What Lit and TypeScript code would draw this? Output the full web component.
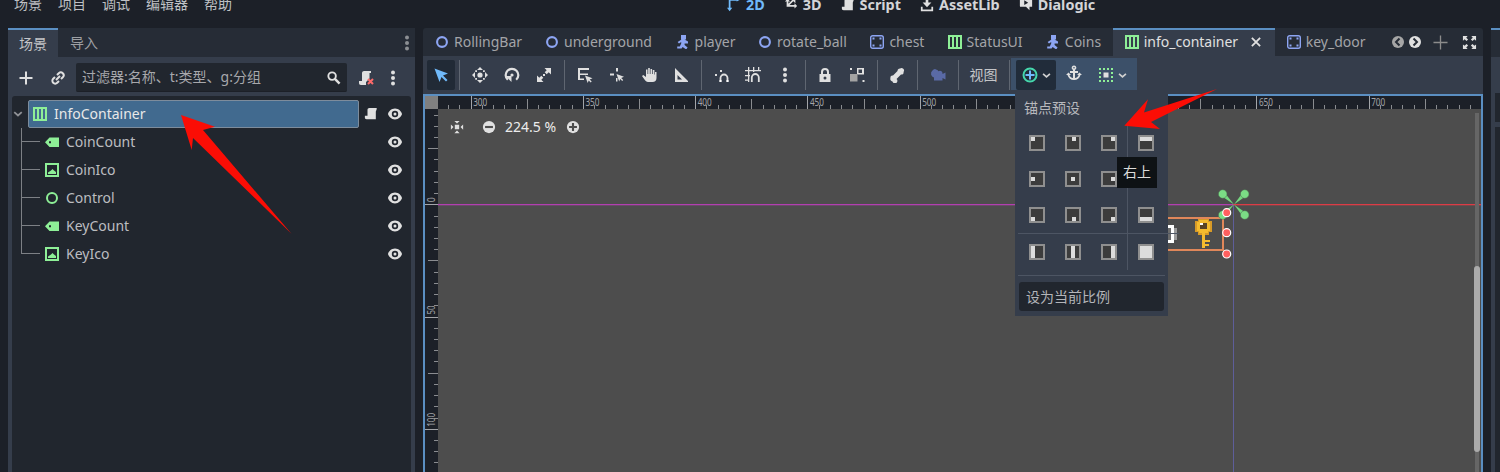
import { LitElement, html, css, svg, nothing } from "lit";
import { customElement } from "lit/decorators.js";

const W = "#e0e0e0";
const B = "#8da5f3";
const G = "#8eef97";

const I: Record<string, any> = {
  ring: svg`<circle cx="8" cy="8" r="4.9" fill="none" stroke="${B}" stroke-width="2.1"/>`,
  gring: svg`<circle cx="8" cy="8" r="5" fill="none" stroke="${G}" stroke-width="2"/>`,
  player: svg`<path fill="${B}" d="M6 1h5v4.500H9.500L13 7.500v2H9.600v1.600l3 2.400-1.400 2-3.600-2.600-1 1.600H2.200v-2h2.600l1.400-3V8L4 9.500 2.600 8l3.900-2.500H6z"/>`,
  frame: svg`<rect x="1.700" y="1.700" width="12.600" height="12.600" rx="2" fill="none" stroke="${B}" stroke-width="1.400"/><path fill="${B}" d="M3.500 3.500h2v2h-2zM10.500 3.500h2v2h-2zM3.500 10.500h2v2h-2zM10.500 10.500h2v2h-2z"/>`,
  box: svg`<path fill="${G}" fill-rule="evenodd" d="M1 1h14v14H1zM3 3v10h2V3zm4 0v10h2V3zm4 0v10h2V3z"/>`,
  label: svg`<path fill="${G}" d="M5.500 3.500H15v9.500H5.500L1 8.200zM5 7.200v2h2v-2z" fill-rule="evenodd"/>`,
  tex: svg`<path fill="${G}" fill-rule="evenodd" d="M1 1h14v14H1zM3 3v10h10V3z"/><path fill="${G}" d="M4 12v-1.500L7 8.500 8.500 7 10 8.500 12 10v2z"/>`,
  eye: svg`<path fill="${W}" fill-rule="evenodd" d="M8 2.600C4.200 2.600 1.600 5.600 1 8c.6 2.400 3.200 5.400 7 5.400s6.400-3 7-5.400c-.6-2.400-3.200-5.400-7-5.400zM8 4.800A3.200 3.200 0 1 1 8 11.200 3.200 3.200 0 0 1 8 4.800z"/><circle cx="8" cy="8" r="1.500" fill="${W}"/>`,
  script: svg`<path fill="${W}" d="M6 1h8.500v1.600l-.6 1.400H14l-.5 1v9H3c-1.400 0-2-1-2-2v-2h3V3c0-1.200 1-2 2-2z"/>`,
  scriptx: svg`<path fill="${W}" d="M6 1h7v2h-1.500v5.500L8 12v3H3c-1.400 0-2-1-2-2v-2h3V3c0-1.200 1-2 2-2z"/><path stroke="#fc6a6a" stroke-width="2" d="M10 9l5 5M15 9l-5 5"/>`,
  plus: svg`<path fill="${W}" d="M7 1.500h2V7h5.500v2H9v5.500H7V9H1.500V7H7z"/>`,
  link: svg`<g fill="none" stroke="${W}" stroke-width="2"><path d="M7 5l1.800-1.800a2.800 2.800 0 0 1 4 4L11 9"/><path d="M9 11l-1.800 1.800a2.800 2.800 0 0 1-4-4L5 7"/><path d="M6 10l4-4"/></g>`,
  search: svg`<circle cx="6.500" cy="6.500" r="4" fill="none" stroke="${W}" stroke-width="2"/><path stroke="${W}" stroke-width="2.600" d="M9.500 9.500l5 5"/>`,
  cursor: svg`<path fill="#70bafa" d="M1.500 1.500l13.500 5-5 2 4.500 4.500-1.500 1.500-4.500-4.500-2 5z"/>`,
  move: svg`<path fill="${W}" d="M8 0l3 3H5zM8 16l-3-3h6zM0 8l3-3v6zM16 8l-3 3V5z"/><circle cx="8" cy="8" r="2.600" fill="${W}"/><path fill="${W}" d="M3.200 3.200h1.800v1.800H3.200zM11 3.200h1.800v1.800H11zM3.200 11h1.800v1.800H3.200zM11 11h1.800v1.800H11z"/>`,
  rotate: svg`<path fill="none" stroke="${W}" stroke-width="2.200" d="M3.800 12.800A6.300 6.300 0 1 1 12.200 12.800"/><circle cx="8" cy="8" r="1.600" fill="${W}"/><path fill="${W}" d="M1.500 9h6v6z"/>`,
  scale: svg`<path fill="${W}" d="M8.500 1H15v6.500l-2.300-2.300-2 2-2-2 2-2zM7.500 15H1V8.500l2.300 2.300 2-2 2 2-2 2z"/><path fill="${W}" d="M7 7h2v2H7z"/>`,
  list: svg`<path fill="${W}" d="M1 1h11v2H3v3.500h8V8H3v3.500h4V13H1z"/><path fill="${W}" d="M8 8.500l7.500 2.700-2.800 1.200 2 2-1 1-2-2L10.700 16z"/>`,
  pivot: svg`<path fill="${W}" d="M7 1h2v3.500H7zM1 6.500h4v2H1zM7 11h1.500v3.500H7z"/><path fill="${W}" d="M7.500 7l7.500 2.700-2.800 1.200 2 2-1 1-2-2-1 2.600z"/>`,
  hand: svg`<path fill="${W}" d="M7.200 1h1.600v6h.7V2h1.600v5h.7V3h1.600v4.500h.6V5h1.500v6c0 2.500-1.500 4-4 4H7c-1.500 0-2.500-1-3.500-2.500L1 9l1.300-1L5 10V2.500h1.500V7h.7z"/>`,
  ruler: svg`<path fill="${W}" fill-rule="evenodd" d="M2 1l13 13v1H2zM4.500 8v4.500H9z"/>`,
  snap: svg`<path fill="${W}" d="M1 7h2v2H1zM6 3h2v2H6z"/><path fill="none" stroke="${W}" stroke-width="1.800" d="M6.500 15v-4a3.500 3.500 0 0 1 7 0v4"/><path fill="#fff" d="M5.500 13h2v2h-2zM12.500 13h2v2h-2z"/>`,
  gridsnap: svg`<path fill="${W}" d="M3 0h1.300v15H3zM8 0h1.300v5H8zM13 0h1.300v4H13zM0 3h16v1.300H0zM0 8h5v1.300H0zM0 12.500h4v1.300H0z"/><path fill="none" stroke="${W}" stroke-width="1.800" d="M6.800 15v-4.500a3.500 3.500 0 0 1 7 0V15"/>`,
  dots: svg`<circle cx="8" cy="2.500" r="2" fill="${W}"/><circle cx="8" cy="8" r="2" fill="${W}"/><circle cx="8" cy="13.500" r="2" fill="${W}"/>`,
  lock: svg`<path fill="${W}" fill-rule="evenodd" d="M8 1a4 4 0 0 1 4 4v2h1.500v8h-11V7H4V5a4 4 0 0 1 4-4zM8 3a2 2 0 0 0-2 2v2h4V5a2 2 0 0 0-2-2z"/><circle cx="8" cy="11" r="1.500" fill="#353d4b"/>`,
  group: svg`<path fill="#a3a3a3" d="M1 7h7.500v7.500H1z"/><path fill="${W}" d="M8 1h7v6.500H8.500V6H13V2.500H9.500V7H8zM1 1h2v2H1zM13.500 13h2v2h-2z"/>`,
  bone: svg`<path fill="${W}" d="M11 1.500a2.500 2.500 0 0 1 3.500 3.500A2 2 0 0 1 12 7.500L7.500 12A2.500 2.500 0 1 1 3.500 14.500 2.500 2.500 0 0 1 1.500 11 2 2 0 0 1 4 8.500L8.500 4A2.500 2.500 0 0 1 11 1.500z"/>`,
  cam: svg`<path fill="#5a6aa6" d="M5.500 2.500a3 3 0 0 1 3 1.800A2.500 2.500 0 0 1 12.500 6v1l3-1.500v7l-3-1.500v2.500H4v-3a4 4 0 0 1-1.500-7 3 3 0 0 1 3-1.500z"/>`,
  anchorp: svg`<circle cx="8" cy="8" r="6.500" fill="none" stroke="#45d7ac" stroke-width="2"/><path stroke="#70bafa" stroke-width="2" d="M8 3.500v9M3.500 8h9"/>`,
  anchor: svg`<path fill="${W}" fill-rule="evenodd" d="M8 .5a2.300 2.300 0 0 1 1 4.400V6h3v2H9v5c1.800-.3 3-1.300 3.600-3H11l2.500-2.500L16 10h-1.500c-.8 3-3.300 5-6.500 5s-5.700-2-6.500-5H0l2.500-2.500L5 10H3.400C4 11.700 5.200 12.700 7 13V8H4V6h3V4.900A2.300 2.300 0 0 1 8 .5zM8 2a.8.8 0 1 0 0 1.600A.8.8 0 0 0 8 2z"/>`,
  sizing: svg`<path fill="${G}" d="M1 1h2v2H1zM5 1h2v2H5zM9 1h2v2H9zM13 1h2v2h-2zM1 5h2v2H1zM13 5h2v2h-2zM1 9h2v2H1zM13 9h2v2h-2zM1 13h2v2H1zM5 13h2v2H5zM9 13h2v2H9zM13 13h2v2h-2z"/><path fill="${W}" d="M5.500 5.500h5v5h-5z"/>`,
  chev: svg`<path fill="none" stroke="currentColor" stroke-width="2.400" d="M3 5.500l5 4.500 5-4.500"/>`,
  x: svg`<path stroke="${W}" stroke-width="2.400" d="M2.500 2.500l11 11M13.500 2.500l-11 11"/>`,
  prev: svg`<circle cx="8" cy="8" r="6" fill="#a6a6a6"/><path fill="none" stroke="#262c36" stroke-width="2" d="M9.500 4.500L6 8l3.500 3.500"/>`,
  next: svg`<circle cx="8" cy="8" r="6" fill="${W}"/><path fill="none" stroke="#262c36" stroke-width="2" d="M6.500 4.500L10 8l-3.500 3.500"/>`,
  tabadd: svg`<path fill="#8c8c8c" d="M7.300.5h1.400v6.800h6.800v1.400H8.700v6.800H7.300V8.700H.5V7.300h6.800z"/>`,
  full: svg`<path fill="${W}" d="M1 1h5L4.500 2.800l2 2-1.700 1.700-2-2L1 6zM15 1v5l-1.800-1.500-2 2-1.700-1.700 2-2L10 1zM1 15v-5l1.800 1.500 2-2 1.700 1.700-2 2L6 15zM15 15h-5l1.500-1.800-2-2 1.700-1.700 2 2L15 10z"/>`,
  center: svg`<path fill="${W}" d="M5.500 5.500h5v5h-5zM1 5l3 3-3 3zM15 5l-3 3 3 3zM5 1l3 3 3-3zM5 15l3-3 3 3z"/>`,
  zminus: svg`<circle cx="8" cy="8" r="7" fill="${W}"/><path fill="#4d4d4d" d="M3.500 6.800h9v2.400h-9z"/>`,
  zplus: svg`<circle cx="8" cy="8" r="7" fill="${W}"/><path fill="#4d4d4d" d="M3.500 6.800h3.300V3.500h2.400v3.300h3.300v2.400H9.200v3.300H6.800V9.200H3.500z"/>`,
  two: svg`<path fill="none" stroke="#70bafa" stroke-width="2" d="M3 12V2h9"/><path fill="#70bafa" d="M0 11h6l-3 4zM11 0l4 2-4 2z"/>`,
  three: svg`<path fill="none" stroke="${W}" stroke-width="2" d="M4 1v8h9M4 9l7-7"/><path fill="${W}" d="M1 4l3-3 3 3zM12 6l3 3-3 3zM8 1h5v5z"/>`,
  dl: svg`<path fill="${W}" d="M6.500 0h3v5H13l-5 5.500L3 5h3.500zM1 10h2v3h10v-3h2v5H1z"/>`,
  dial: svg`<path fill="${W}" fill-rule="evenodd" d="M2 0h12a1 1 0 0 1 1 1v9h-3v4l-4-4H2a1 1 0 0 1-1-1V1a1 1 0 0 1 1-1zM6 2.500V8l4.500-2.700z"/>`,
};

const crops: Record<string, string> = {
  ring: "2 2 12 12", gring: "1 1 14 14", box: "1 1 14 14", label: "1 1 14 14", tex: "1 1 14 14",
  frame: "1 1 14 14", player: "1 1 14 14", prev: "2 2 12 12", next: "2 2 12 12", eye: "1 1 14 14",
};

const ic = (n: string, s = 16) =>
  html`<svg class="ic" width=${s} height=${s} viewBox=${crops[n] ?? "0 0 16 16"}>${I[n]}</svg>`;

const tabs = [
  ["ring", "RollingBar", 12], ["ring", "underground", 12], ["player", "player", 14],
  ["ring", "rotate_ball", 12], ["frame", "chest", 14], ["box", "StatusUI", 14],
  ["player", "Coins", 14], ["box", "info_container", 14], ["frame", "key_door", 14],
] as const;

const tree = [
  ["label", "CoinCount"], ["tex", "CoinIco"], ["gring", "Control"], ["label", "KeyCount"], ["tex", "KeyIco"],
];

const anchors: [number, number, number, number][] = [
  [2, 2, 4, 4], [7, 2, 4, 4], [10, 2, 4, 4], [2, 2, 12, 4],
  [2, 6, 4, 4], [6, 6, 4, 4], [10, 6, 4, 4], [6, 2, 4, 12],
  [2, 10, 4, 4], [7, 10, 4, 4], [10, 10, 4, 4], [2, 10, 12, 4],
  [2, 2, 4, 12], [6, 2, 4, 12], [10, 2, 4, 12], [2, 2, 12, 12],
];

const range = (from: number, to: number, step: number) => {
  const out: number[] = [];
  for (let v = from; v < to; v += step) out.push(v);
  return out;
};

@customElement("app-root")
export class AppRoot extends LitElement {
  static styles = css`
    :host { display: block; width: 1500px; height: 472px; overflow: hidden; position: relative;
      background: #1c2028; color: #c4c5c8; font: 14px/20px "Noto Sans", "Noto Sans CJK SC", sans-serif; }
    .ic { display: block; flex: none; }
    .top { height: 28px; display: flex; align-items: flex-start; padding-left: 14px; gap: 16px; overflow: hidden; }
    .menu { margin-top: -6px; line-height: 20px; color: #bfc0c4; }
    .modes { display: flex; gap: 19px; margin: -5px 0 0 479px; font-weight: 700; font-size: 14.4px; color: #d4d5d8; }
    .mode { display: flex; align-items: center; gap: 5px; }
    .mode.on { color: #70bafa; }
    .main { display: flex; height: 444px; padding-left: 8px; gap: 8px; }

    .left { width: 407px; display: flex; flex-direction: column; background: #353d4b; }
    .ltabs { height: 29px; flex: none; background: #262c36; display: flex; align-items: stretch; }
    .ltab { padding: 0 11px; line-height: 29px; color: #9ea0a4; }
    .ltab.on { width: 50px; box-sizing: border-box; background: #353d4b; border-top: 2px solid #5b8fc2; line-height: 27px; color: #c4c5c8; padding: 0 11px; margin-right: 1px; }
    .spring { flex: 1; }
    .menu-dots { align-self: center; opacity: .55; }
    .filter { height: 29px; margin-top: 6px; display: flex; align-items: center; padding-left: 10px; flex: none; }
    .filter .link { margin: 0 10px 0 16px; }
    .input { width: 271px; height: 29px; box-sizing: border-box; background: #21262e; border-bottom: 1px solid #1c2028; display: flex; align-items: center; padding: 0 6px; color: #a7a8ac; border-radius: 2px; justify-content: space-between; }
    .filter .sx { margin: 0 11px 0 11px; }
    .treewrap { flex: 1; margin: 4px 4px 0; background: #21262e; padding-top: 4px; border-radius: 3px 3px 0 0; }
    .row { height: 28px; display: flex; align-items: center; padding-right: 8px; }
    .row .eye { margin-left: auto; margin-right: 1px; }
    .root-chev { width: 16px; color: #8f9196; }
    .rootsel { width: 331px; height: 28px; box-sizing: border-box; background: #416a8f; border: 1px solid #7d8c9c; border-radius: 2px; display: flex; align-items: center; padding-left: 4px; gap: 7px; color: #e8e8e8; margin-right: 5px; }
    .branch { width: 19px; height: 28px; margin-left: 9px; margin-right: 5px; flex: none;
      background: linear-gradient(#7d8085, #7d8085) 0 0 / 1px 100% no-repeat, linear-gradient(#7d8085, #7d8085) 0 13px / 100% 1px no-repeat; }
    .branch.last { background: linear-gradient(#7d8085, #7d8085) 0 0 / 1px 14px no-repeat, linear-gradient(#7d8085, #7d8085) 0 13px / 100% 1px no-repeat; }
    .row .nm { margin-left: 7px; color: #bcbdc0; }

    .right { width: 1060px; display: flex; flex-direction: column; flex: none; }
    .tabs { height: 28px; flex: none; background: #262c36; display: flex; align-items: stretch; padding-left: 1px; border-radius: 3px 3px 0 0; }
    .tab { display: flex; align-items: center; padding: 0 12px; gap: 6px; color: #a3a4a8; }
    .tab.big { gap: 5px; padding: 0 11.6px; }
    .tab.on { background: #353d4b; border-top: 2px solid #5b8fc2; color: #e0e0e0; padding: 0 13px 2px 12px; box-sizing: border-box; }
    .tab.on .x { margin-left: 7px; }
    .tabctl { margin-left: auto; display: flex; align-items: center; gap: 5px; padding-right: 6px; }
    .tabctl .add { margin: 0 9px 0 7px; }
    .tools { height: 38px; flex: none; box-sizing: border-box; background: #353d4b; display: flex; align-items: flex-start; padding: 4px 0 0 4px; }
    .btn { height: 30px; display: flex; align-items: center; justify-content: center; width: 32px; flex: none; }
    .btn.w { width: 31.5px; }
    .btn.sel { width: 28px; background: #212a36; border-radius: 2px; }
    .sep { width: 1px; height: 30px; background: #5f6671; margin: 0 4px; flex: none; }
    .view { width: 42px; color: #c4c5c8; }
    .group { width: 126px; height: 32px; background: #3c5069; display: flex; align-items: flex-start; padding: 0 0 0 5px; box-sizing: border-box; margin: -2px 0 0 -3px; }
    .drop { display: flex; align-items: center; color: #d0d0d0; height: 30px; margin-top: 2px; }
    .drop.act { width: 40px; background: #212c3a; border-radius: 2px; padding-left: 6px; gap: 3px; box-sizing: border-box; }
    .anc { margin: 0 16px 0 10px; }
    .drop .chv { margin-left: 3px; }

    .vp { flex: 1; border: 2px solid #5b8fc2; border-bottom: 0; display: flex; flex-direction: column; min-height: 0; box-sizing: border-box; }
    .rtop { height: 13px; flex: none; display: flex; background: #1c2028; }
    .corner { width: 13px; height: 13px; background: #808080; flex: none; }
    .rbody { flex: 1; display: flex; min-height: 0; }
    .rleft { width: 13px; flex: none; background: #1c2028; }
    .canvas { flex: 1; background: #4d4d4d; position: relative; overflow: hidden; }
    .scene { position: absolute; left: 0; top: 0; }
    .zoom { position: relative; display: flex; align-items: center; height: 16px; padding: 10px 0 0 12px; color: #ececec; }
    .zoom .zm { margin-left: 18px; }
    .zoom .pct { margin: 0 10px 0 9px; }
    .track { position: absolute; right: 2px; top: 4px; bottom: 0; width: 4px; background: #666; }
    .thumb { position: absolute; left: -1px; top: 153px; width: 6px; height: 186px; border-radius: 3px; background: #ababab; }

    .far { flex: 1; display: flex; flex-direction: column; background: #353d4b; border-top: 2px solid #5b8fc2; }
    .far .bar { height: 27px; background: #262c36; }
    .far .bx { height: 29px; margin: 36px 0 0 4px; background: #21262e; }
    .far .by { flex: 1; margin: 5px 0 0 4px; background: #21262e; }

    .popup { position: absolute; left: 1015px; top: 94px; width: 153px; height: 222px; background: #353d4b; box-sizing: border-box; }
    .popup h4 { margin: 0; font-weight: 400; color: #b8b9bd; padding: 4px 0 0 9px; font-size: 14px; line-height: 20px; }
    .pgrid { position: relative; margin: 17px 0 0 14px; display: grid; grid-template-columns: 36px 36px 37px 16px; grid-template-rows: 36px 36px 37px 16px; }
    .pgrid::before { content: ""; position: absolute; left: 98px; top: -10px; height: 145px; width: 1px; background: #4d5563; }
    .pgrid::after { content: ""; position: absolute; left: -11px; right: -11px; top: 98px; height: 1px; background: #4d5563; }
    .a { width: 16px; height: 16px; box-sizing: border-box; border: 2px solid #8f8f8f; background: #3c3c3c; position: relative; z-index: 1; }
    .a i { position: absolute; background: #dcdcdc; }
    .hr { height: 1px; background: #4d5563; margin: 15px 3px 6px; }
    .setbtn { margin: 0 4px; height: 29px; background: #21262e; border-radius: 3px; color: #b4b5b9; padding-left: 7px; line-height: 29px; font-size: 14px; }
    .tip { position: absolute; z-index: 2; left: 1117px; top: 157px; width: 40px; height: 31px; background: #0e1215; color: #dcdcdc; text-align: center; line-height: 30px; }
    .arrows { position: absolute; z-index: 3; left: 0; top: 0; pointer-events: none; }
  `;

  private ruleTop() {
    const x0 = 470.7 - 438;
    const step = 11.225;
    return html`<svg width="1043" height="13" viewBox="0 0 1043 13">
      ${range(-3, 90, 1).map((k) => {
        const x = Math.round(x0 + k * step) + 0.5;
        if (x < 0) return nothing;
        const y1 = k % 10 === 0 ? 0 : k % 5 === 0 ? 3 : 9;
        const col = k % 10 === 0 ? "#a3a5a9" : "#8a8c90";
        return svg`<line x1=${x} x2=${x} y1=${y1} y2="13" stroke=${col}/>`;
      })}
      ${range(0, 9, 1).map((k) => {
        const x = x0 + k * 112.25 + 2.5;
        return svg`<text x=${x} y="9.5" font-size="10" fill="#a3a5a9" textLength="14" lengthAdjust="spacingAndGlyphs">${300 + k * 50}</text>`;
      })}
    </svg>`;
  }

  private ruleLeft() {
    const y0 = 204.3 - 109;
    const step = 11.225;
    return html`<svg width="13" height="363" viewBox="0 0 13 363">
      ${range(-9, 25, 1).map((k) => {
        const y = Math.round(y0 + k * step) + 0.5;
        if (y < 0) return nothing;
        const x1 = k % 10 === 0 ? 0 : k % 5 === 0 ? 3 : 9;
        const col = k % 10 === 0 ? "#a3a5a9" : "#8a8c90";
        return svg`<line y1=${y} y2=${y} x1=${x1} x2="13" stroke=${col}/>`;
      })}
      ${[0, 50, 100].map((v, i) => {
        const y = y0 + i * 112.25 - 2;
        const len = [5, 9, 14][i];
        return svg`<text transform="translate(9.5 ${y}) rotate(-90)" font-size="10" fill="#a3a5a9" textLength=${len} lengthAdjust="spacingAndGlyphs">${v}</text>`;
      })}
    </svg>`;
  }

  private scene() {
    const lobes = [[1222.7, 194], [1244.7, 194], [1244.7, 215], [1222.7, 215]];
    const cx = 1234, cy = 204.5;
    return html`<svg class="scene" width="1043" height="363" viewBox="438 109 1043 363">
      <rect x="438" y="204" width="795" height="1.300" fill="#b23fb0"/>
      <rect x="1233" y="204" width="250" height="1.300" fill="#dc3c46"/>
      <rect x="1233" y="205" width="1" height="267" fill="#5e5e9a"/>
      <rect x="1100" y="218" width="123" height="32" fill="none" stroke="#e0875a" stroke-width="2"/>
      <g shape-rendering="crispEdges">
        <rect x="1168" y="225" width="6" height="3" fill="#fff"/><rect x="1171" y="228" width="3" height="12" fill="#fff"/>
        <rect x="1168" y="240" width="6" height="3" fill="#fff"/><rect x="1174" y="228" width="3" height="12" fill="#9b9b9b"/>
        <rect x="1168" y="228" width="3" height="12" fill="#6b6b6b"/>
        <path fill="#d79a27" d="M1198 219h11v2h3v11h-3v3h-11v-3h-3v-11h3z"/>
        <path fill="#f4bb2e" d="M1199 220h9v2h2v9h-2v2h-9v-2h-2v-9h2z"/>
        <rect x="1200" y="223" width="7" height="6" fill="#5a4426"/>
        <rect x="1200" y="223" width="3" height="2" fill="#fff"/>
        <rect x="1202" y="233" width="3" height="15" fill="#f4bb2e"/>
        <rect x="1205" y="240" width="5" height="2" fill="#f4bb2e"/>
        <rect x="1205" y="244" width="4" height="2" fill="#f4bb2e"/>
      </g>
      ${lobes.map(([x, y]) => {
        const dx = x - cx, dy = y - cy, l = Math.hypot(dx, dy), nx = -dy / l, ny = dx / l;
        return svg`<path fill="#74d67f" d="M${cx} ${cy}L${x + nx * 2.4} ${y + ny * 2.4}L${x - nx * 2.4} ${y - ny * 2.4}Z"/>
          <circle cx=${x} cy=${y} r="4.300" fill="#7bdc85" stroke="#4a6a4f" stroke-width=".5"/>`;
      })}
      ${[212.7, 232.7, 254].map((y) => svg`<circle cx="1226.7" cy=${y} r="4" fill="#ff5f5f" stroke="#fff" stroke-width="1.200"/>`)}
    </svg>`;
  }

  render() {
    const grp = (names: string[], cls = "") =>
      names.map((n) => html`<div class="btn ${cls}">${ic(n)}</div>`);
    return html`
      <div class="top">
        ${["场景", "项目", "调试", "编辑器", "帮助"].map((m) => html`<span class="menu">${m}</span>`)}
        <div class="modes">
          <div class="mode on">${ic("two", 14)}2D</div>
          <div class="mode">${ic("three", 14)}3D</div>
          <div class="mode">${ic("script", 14)}Script</div>
          <div class="mode">${ic("dl", 14)}AssetLib</div>
          <div class="mode">${ic("dial", 14)}Dialogic</div>
        </div>
      </div>
      <div class="main">
        <section class="left">
          <div class="ltabs">
            <div class="ltab on">场景</div><div class="ltab">导入</div><div class="spring"></div>
            <div class="menu-dots">${ic("dots", 16)}</div>
          </div>
          <div class="filter">
            ${ic("plus")}
            <div class="link">${ic("link")}</div>
            <div class="input"><span>过滤器:名称、t:类型、g:分组</span>${ic("search", 15)}</div>
            <div class="sx">${ic("scriptx")}</div>
            ${ic("dots")}
          </div>
          <div class="treewrap">
            <div class="row">
              <div class="root-chev">${ic("chev", 12)}</div>
              <div class="rootsel">${ic("box", 14)}InfoContainer</div>
              ${ic("script", 14)}
              <div class="eye">${ic("eye", 14)}</div>
            </div>
            ${tree.map(([n, t], i) => html`<div class="row">
              <div class="branch ${i === tree.length - 1 ? "last" : ""}"></div>
              ${ic(n, 14)}<span class="nm">${t}</span>
              <div class="eye">${ic("eye", 14)}</div>
            </div>`)}
          </div>
        </section>

        <section class="right">
          <div class="tabs">
            ${tabs.map(([n, t, s]) => html`<div class="tab ${s === 14 ? "big" : ""} ${t === "info_container" ? "on" : ""}">
              ${ic(n, s)}${t}${t === "info_container" ? html`<span class="x">${ic("x", 12)}</span>` : nothing}
            </div>`)}
            <div class="tabctl">
              ${ic("prev", 12)}${ic("next", 12)}
              <div class="add">${ic("tabadd", 15)}</div>
              ${ic("full", 15)}
            </div>
          </div>
          <div class="tools">
            <div class="btn sel">${ic("cursor")}</div><div class="sep"></div>
            ${grp(["move", "rotate", "scale"])}<div class="sep"></div>
            ${grp(["list", "pivot", "hand", "ruler"])}<div class="sep"></div>
            ${grp(["snap", "gridsnap", "dots"], "w")}<div class="sep"></div>
            ${grp(["lock", "group"], "w")}<div class="sep"></div>
            ${grp(["bone"], "w")}<div class="sep"></div>
            ${grp(["cam"], "w")}<div class="sep"></div>
            <div class="btn view">视图</div><div class="sep"></div>
            <div class="group">
              <div class="drop act">${ic("anchorp")}<span>${ic("chev", 11)}</span></div>
              <div class="drop anc">${ic("anchor")}</div>
              <div class="drop">${ic("sizing")}<span class="chv">${ic("chev", 11)}</span></div>
            </div>
          </div>
          <div class="vp">
            <div class="rtop"><div class="corner"></div>${this.ruleTop()}</div>
            <div class="rbody">
              <div class="rleft">${this.ruleLeft()}</div>
              <div class="canvas">
                ${this.scene()}
                <div class="zoom">
                  ${ic("center", 14)}
                  <span class="zm">${ic("zminus", 14)}</span>
                  <span class="pct">224.5 %</span>
                  ${ic("zplus", 14)}
                </div>
                <div class="track"><div class="thumb"></div></div>
              </div>
            </div>
          </div>
        </section>

        <section class="far"><div class="bar"></div><div class="bx"></div><div class="by"></div></section>
      </div>

      <div class="popup">
        <h4>锚点预设</h4>
        <div class="pgrid">
          ${anchors.map(([x, y, w, h]) => html`<div class="a"><i style="left:${x - 2}px;top:${y - 2}px;width:${w}px;height:${h}px"></i></div>`)}
        </div>
        <div class="hr"></div>
        <div class="setbtn">设为当前比例</div>
      </div>
      <div class="tip">右上</div>
      <svg class="arrows" width="1500" height="472" viewBox="0 0 1500 472">
        <path fill="#fb0d05" d="M181 115L215 126.700L203 130L291.700 234L193 138L191.700 150Z"/>
        <path fill="#fb0d05" d="M1124.300 125.700L1148 99.300L1144 112.500L1217 89L1151 122L1160 129Z"/>
      </svg>
    `;
  }
}
